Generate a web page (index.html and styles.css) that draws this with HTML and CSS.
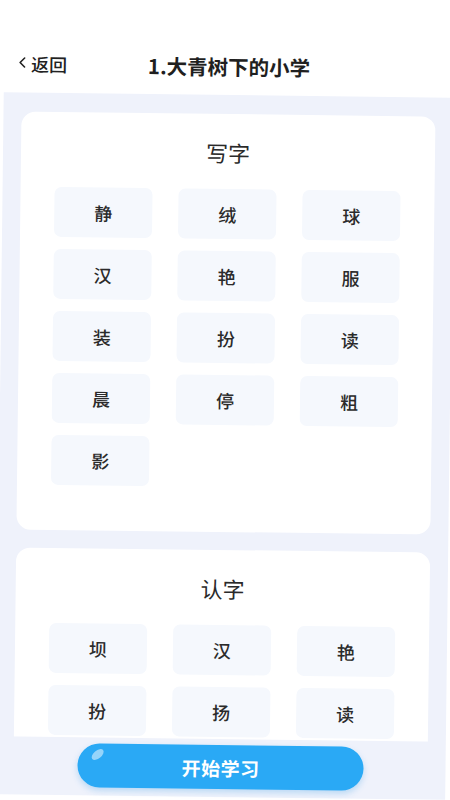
FILE: index.html
```html
<!DOCTYPE html>
<html lang="zh">
<head>
<meta charset="utf-8">
<title>1.大青树下的小学</title>
<link rel="stylesheet" href="styles.css">
</head>
<body>
<div class="page">
  <header class="header">
    <div class="back">
      <svg class="chev" width="8" height="12" viewBox="0 0 8 12"><polyline points="6.5,1.5 2,6 6.5,10.5" fill="none" stroke="#222" stroke-width="1.6" stroke-linecap="round" stroke-linejoin="round"/></svg>
      <span>返回</span>
    </div>
    <h1 class="title">1.大青树下的小学</h1>
    <div></div>
  </header>
  <main class="panel">
    <div class="scroll">
      <section class="card">
        <h2 class="card-title">写字</h2>
        <div class="grid">
          <div class="cell">静</div><div class="cell">绒</div><div class="cell">球</div>
          <div class="cell">汉</div><div class="cell">艳</div><div class="cell">服</div>
          <div class="cell">装</div><div class="cell">扮</div><div class="cell">读</div>
          <div class="cell">晨</div><div class="cell">停</div><div class="cell">粗</div>
          <div class="cell">影</div>
        </div>
      </section>
      <section class="card card-tall">
        <h2 class="card-title">认字</h2>
        <div class="grid">
          <div class="cell">坝</div><div class="cell">汉</div><div class="cell">艳</div>
          <div class="cell">扮</div><div class="cell">扬</div><div class="cell">读</div>
        </div>
      </section>
    </div>
    <div class="actions">
      <button class="start">开始学习</button>
    </div>
  </main>
</div>
</body>
</html>
```
FILE: styles.css
```css
* { box-sizing: border-box; }
html, body {
  margin: 0;
  padding: 0;
  background: #ffffff;
  overflow: hidden;
}
body {
  width: 450px;
  height: 800px;
  font-family: "Noto Sans CJK SC", "Noto Sans", sans-serif;
  color: #222;
}
.page {
  width: 450px;
  height: 800px;
  display: flex;
  flex-direction: column;
  transform: rotate(0.7deg);
  transform-origin: 225px 400px;
  background: #ffffff;
}
.header {
  height: 95px;
  flex: none;
  padding-top: 36px;
  display: grid;
  grid-template-columns: 1fr auto 1fr;
  align-items: center;
}
.back {
  display: flex;
  align-items: center;
  gap: 5px;
  padding-left: 14px;
  font-size: 18px;
  font-weight: 500;
  color: #222;
  line-height: 24px;
}
.chev { display: block; margin-top: -2px; }
.title {
  margin: 0;
  font-size: 20.5px;
  font-weight: 700;
  color: #1f1f1f;
  line-height: 28px;
}
.panel {
  height: 702px;
  flex: none;
  background: #eff2fb;
  display: flex;
  flex-direction: column;
}
.scroll {
  height: 644px;
  flex: none;
  overflow: hidden;
  padding: 19px 18px 0;
  display: flex;
  flex-direction: column;
  gap: 18px;
}
.card {
  flex: none;
  background: #ffffff;
  border-radius: 14px;
  padding: 23px 34px 45px;
}
.card-tall {
  min-height: 260px;
}
.card-title {
  margin: 0 0 22px;
  text-align: center;
  font-size: 22px;
  font-weight: 400;
  line-height: 30px;
  color: #2a2a2a;
}
.grid {
  display: grid;
  grid-template-columns: repeat(3, 1fr);
  grid-auto-rows: 50px;
  column-gap: 26px;
  row-gap: 12px;
}
.cell {
  background: #f5f8fd;
  border-radius: 7px;
  display: flex;
  align-items: center;
  justify-content: center;
  font-size: 18px;
  font-weight: 500;
  color: #2b2b2b;
}
.actions {
  flex: none;
  display: flex;
  justify-content: center;
  padding-top: 6px;
}
.start {
  position: relative;
  width: 286px;
  height: 44px;
  border: none;
  border-radius: 22px;
  background: #2aa9f5;
  box-shadow: 0 3px 6px rgba(42, 150, 230, 0.28);
  color: #ffffff;
  font-family: "Noto Sans CJK SC", "Noto Sans", sans-serif;
  font-size: 19px;
  font-weight: 700;
  letter-spacing: 0.5px;
  padding: 0;
}
.start::before {
  content: "";
  position: absolute;
  left: 13px;
  top: 7px;
  width: 14px;
  height: 8px;
  border-radius: 50%;
  background: rgba(255, 255, 255, 0.5);
  transform: rotate(-40deg);
}
```
